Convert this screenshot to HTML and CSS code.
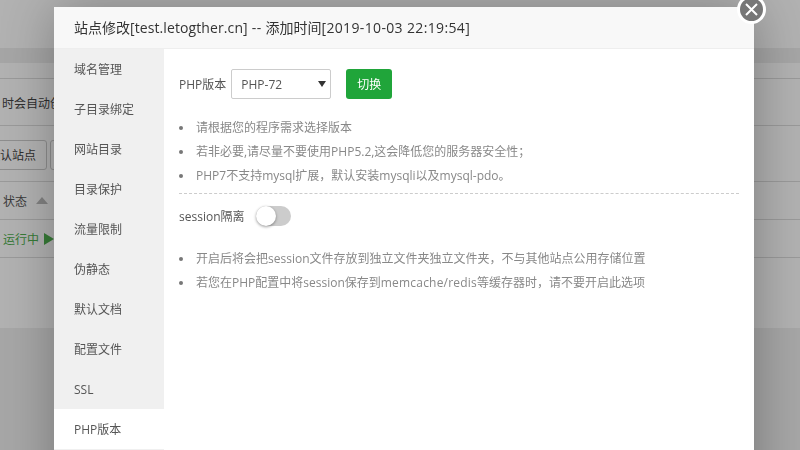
FILE: index.html
```html
<!DOCTYPE html>
<html lang="zh-CN">

<head>
    <meta charset="UTF-8">
    <title>站点修改</title>
    <link rel="stylesheet" href="styles.css">
</head>

<body>
    <div class="page">
        <div class="page-top"></div>
        <div class="page-band"></div>
        <div class="page-row row-blank"></div>
        <div class="page-row row-tip">时会自动创建</div>
        <div class="page-row row-btns">
            <button class="page-btn">默认站点</button>
            <button class="page-btn">设置</button>
        </div>
        <div class="page-row row-head">状态 <span class="sort-up"></span></div>
        <div class="page-row row-site">运行中 <span class="play"></span></div>
        <div class="page-row row-end"></div>
    </div>

    <div class="shade"></div>

    <div class="layer">
        <button class="layer-close" aria-label="关闭">
            <svg width="15" height="15" viewBox="0 0 15 15">
                <path d="M2 2 13 13M13 2 2 13" />
            </svg>
        </button>
        <div class="layer-title">站点修改<span class="title-host">[test.letogther.cn]</span><span class="title-gap"> -- </span>添加时间<span class="title-gap">[2019-10-03 22:19:54]</span></div>
        <div class="layer-body">
            <ul class="side-menu">
                <li>域名管理</li>
                <li>子目录绑定</li>
                <li>网站目录</li>
                <li>目录保护</li>
                <li>流量限制</li>
                <li>伪静态</li>
                <li>默认文档</li>
                <li>配置文件</li>
                <li>SSL</li>
                <li class="active">PHP版本</li>
            </ul>
            <div class="content">
                <div class="php-row">
                    <span class="php-label">PHP版本</span>
                    <div class="select-box">
                        <select>
                            <option>PHP-72</option>
                        </select>
                    </div>
                    <button class="btn-green">切换</button>
                </div>
                <ul class="help">
                    <li>请根据您的程序需求选择版本</li>
                    <li>若非必要,请尽量不要使用PHP5.2,这会降低您的服务器安全性；</li>
                    <li>PHP7不支持mysql扩展，默认安装mysqli以及mysql-pdo。</li>
                </ul>
                <div class="line"></div>
                <div class="session-row">
                    <span class="session-label">session隔离</span>
                    <span class="switch"></span>
                </div>
                <ul class="help help-session">
                    <li>开启后将会把session文件存放到独立文件夹独立文件夹，不与其他站点公用存储位置</li>
                    <li>若您在PHP配置中将session保存到<span class="help-wide">memcache/redis</span>等缓存器时，请不要开启此选项</li>
                </ul>
            </div>
        </div>
    </div>
</body>

</html>
```

FILE: styles.css
```css
body {
    margin: 0;
    height: 450px;
    overflow: hidden;
    background-color: #f0f0f0;
    font-family: "Open Sans", "Noto Sans CJK SC", sans-serif;
    font-size: 12px;
    color: #555;
}

ul {
    margin: 0;
    padding: 0;
}

/* 后面的网页 */
.page-top {
    height: 48px;
    background-color: #fff;
}

.page-band {
    height: 15px;
    background-color: #eee;
}

.page-row {
    display: flex;
    align-items: center;
    box-sizing: border-box;
    background-color: #fff;
    border-bottom: 1px solid #ddd;
    white-space: nowrap;
}

.row-blank {
    height: 16px;
}

.row-tip {
    height: 47px;
    padding: 2px 0 0 2px;
    color: #444;
}

.row-btns {
    height: 56px;
    gap: 3px;
    padding-top: 3px;
}

.page-btn {
    height: 30px;
    padding: 0 10px;
    border: 1px solid #ccc;
    border-radius: 3px;
    background-color: #fff;
    font: inherit;
    color: #444;
}

.page-btn:first-child {
    margin-left: -23px;
}

.row-head {
    height: 38px;
    padding-left: 3px;
    color: #555;
}

.sort-up {
    margin-left: 9px;
    border: 6px solid transparent;
    border-top: 0;
    border-bottom: 7px solid #bbb;
}

.row-site {
    height: 38px;
    padding-left: 3px;
    color: #50b050;
}

.play {
    margin-left: 5px;
    border: 6px solid transparent;
    border-left: 10px solid #50b050;
    border-right: 0;
}

.row-end {
    height: 70px;
    border-bottom: 0;
}

.shade {
    position: fixed;
    top: 0;
    right: 0;
    bottom: 0;
    left: 0;
    background-color: rgba(0, 0, 0, 0.3);
}

/* 弹层 */
.layer {
    position: absolute;
    top: 7px;
    left: 54px;
    width: 700px;
    height: 560px;
    background-color: #fff;
    box-shadow: 1px 1px 50px rgba(0, 0, 0, 0.3);
}

.layer-close {
    position: absolute;
    top: -12px;
    right: -12px;
    display: flex;
    align-items: center;
    justify-content: center;
    box-sizing: border-box;
    width: 29px;
    height: 29px;
    padding: 0;
    border: 3px solid #fff;
    border-radius: 50%;
    background-color: #777;
}

.layer-close path {
    fill: none;
    stroke: #fff;
    stroke-width: 2;
}

.layer-title {
    height: 41px;
    padding-left: 20px;
    line-height: 41px;
    border-bottom: 1px solid #eee;
    background-color: #f8f8f8;
    font-size: 14px;
    color: #333;
}

.title-host {
    letter-spacing: 0.1px;
}

/* 英文和数字比中文字体稍宽 */
.title-gap {
    letter-spacing: 0.35px;
}

.layer-body {
    display: flex;
}

.side-menu {
    width: 110px;
    height: 517px;
    flex: none;
    list-style: none;
    background-color: #f0f0f0;
}

.side-menu li {
    height: 40px;
    padding-left: 20px;
    line-height: 42px;
    color: #555;
}

.side-menu .active {
    background-color: #fff;
}

.content {
    flex: 1;
    padding: 20px 15px;
}

.php-row {
    display: flex;
    align-items: center;
    height: 30px;
}

.php-label {
    margin-right: 5px;
    color: #555;
}

.select-box {
    position: relative;
    width: 100px;
    height: 30px;
}

/* 用上边框做一个向下的箭头 */
.select-box::after {
    content: "";
    position: absolute;
    right: 5px;
    top: 12px;
    border: 4px solid transparent;
    border-bottom: 0;
    border-top: 6px solid #333;
}

.select-box select {
    width: 100%;
    height: 100%;
    padding-left: 9px;
    border: 1px solid #ccc;
    border-radius: 2px;
    background-color: #fff;
    font: inherit;
    color: #555;
    appearance: none;
}

.btn-green {
    width: 46px;
    height: 30px;
    margin-left: 15px;
    padding: 0;
    border: 0;
    border-radius: 3px;
    background-color: #20a53a;
    font: inherit;
    color: #fff;
}

.help {
    margin-top: 17px;
    list-style: none;
    color: #888;
}

.help li {
    line-height: 24px;
    white-space: nowrap;
}

/* 圆点比默认列表更靠左 */
.help li::before {
    content: "";
    display: inline-block;
    width: 4px;
    height: 4px;
    margin-right: 13px;
    border-radius: 50%;
    background-color: #777;
    vertical-align: 2px;
}

.help-wide {
    letter-spacing: 0.2px;
}

.line {
    margin-top: 5px;
    border-top: 1px dashed #ccc;
}

.session-row {
    display: flex;
    align-items: center;
    height: 20px;
    margin-top: 12px;
}

.session-label {
    color: #555;
}

.switch {
    position: relative;
    box-sizing: border-box;
    width: 35px;
    height: 20px;
    margin-left: 11px;
    border-radius: 10px;
    background-color: #ccc;
}

.switch::after {
    content: "";
    position: absolute;
    top: 0;
    left: 0;
    width: 20px;
    height: 20px;
    border-radius: 50%;
    background-color: #fff;
    box-shadow: 0 1px 3px rgba(0, 0, 0, 0.4);
}

.help-session {
    margin-top: 21px;
}
```
